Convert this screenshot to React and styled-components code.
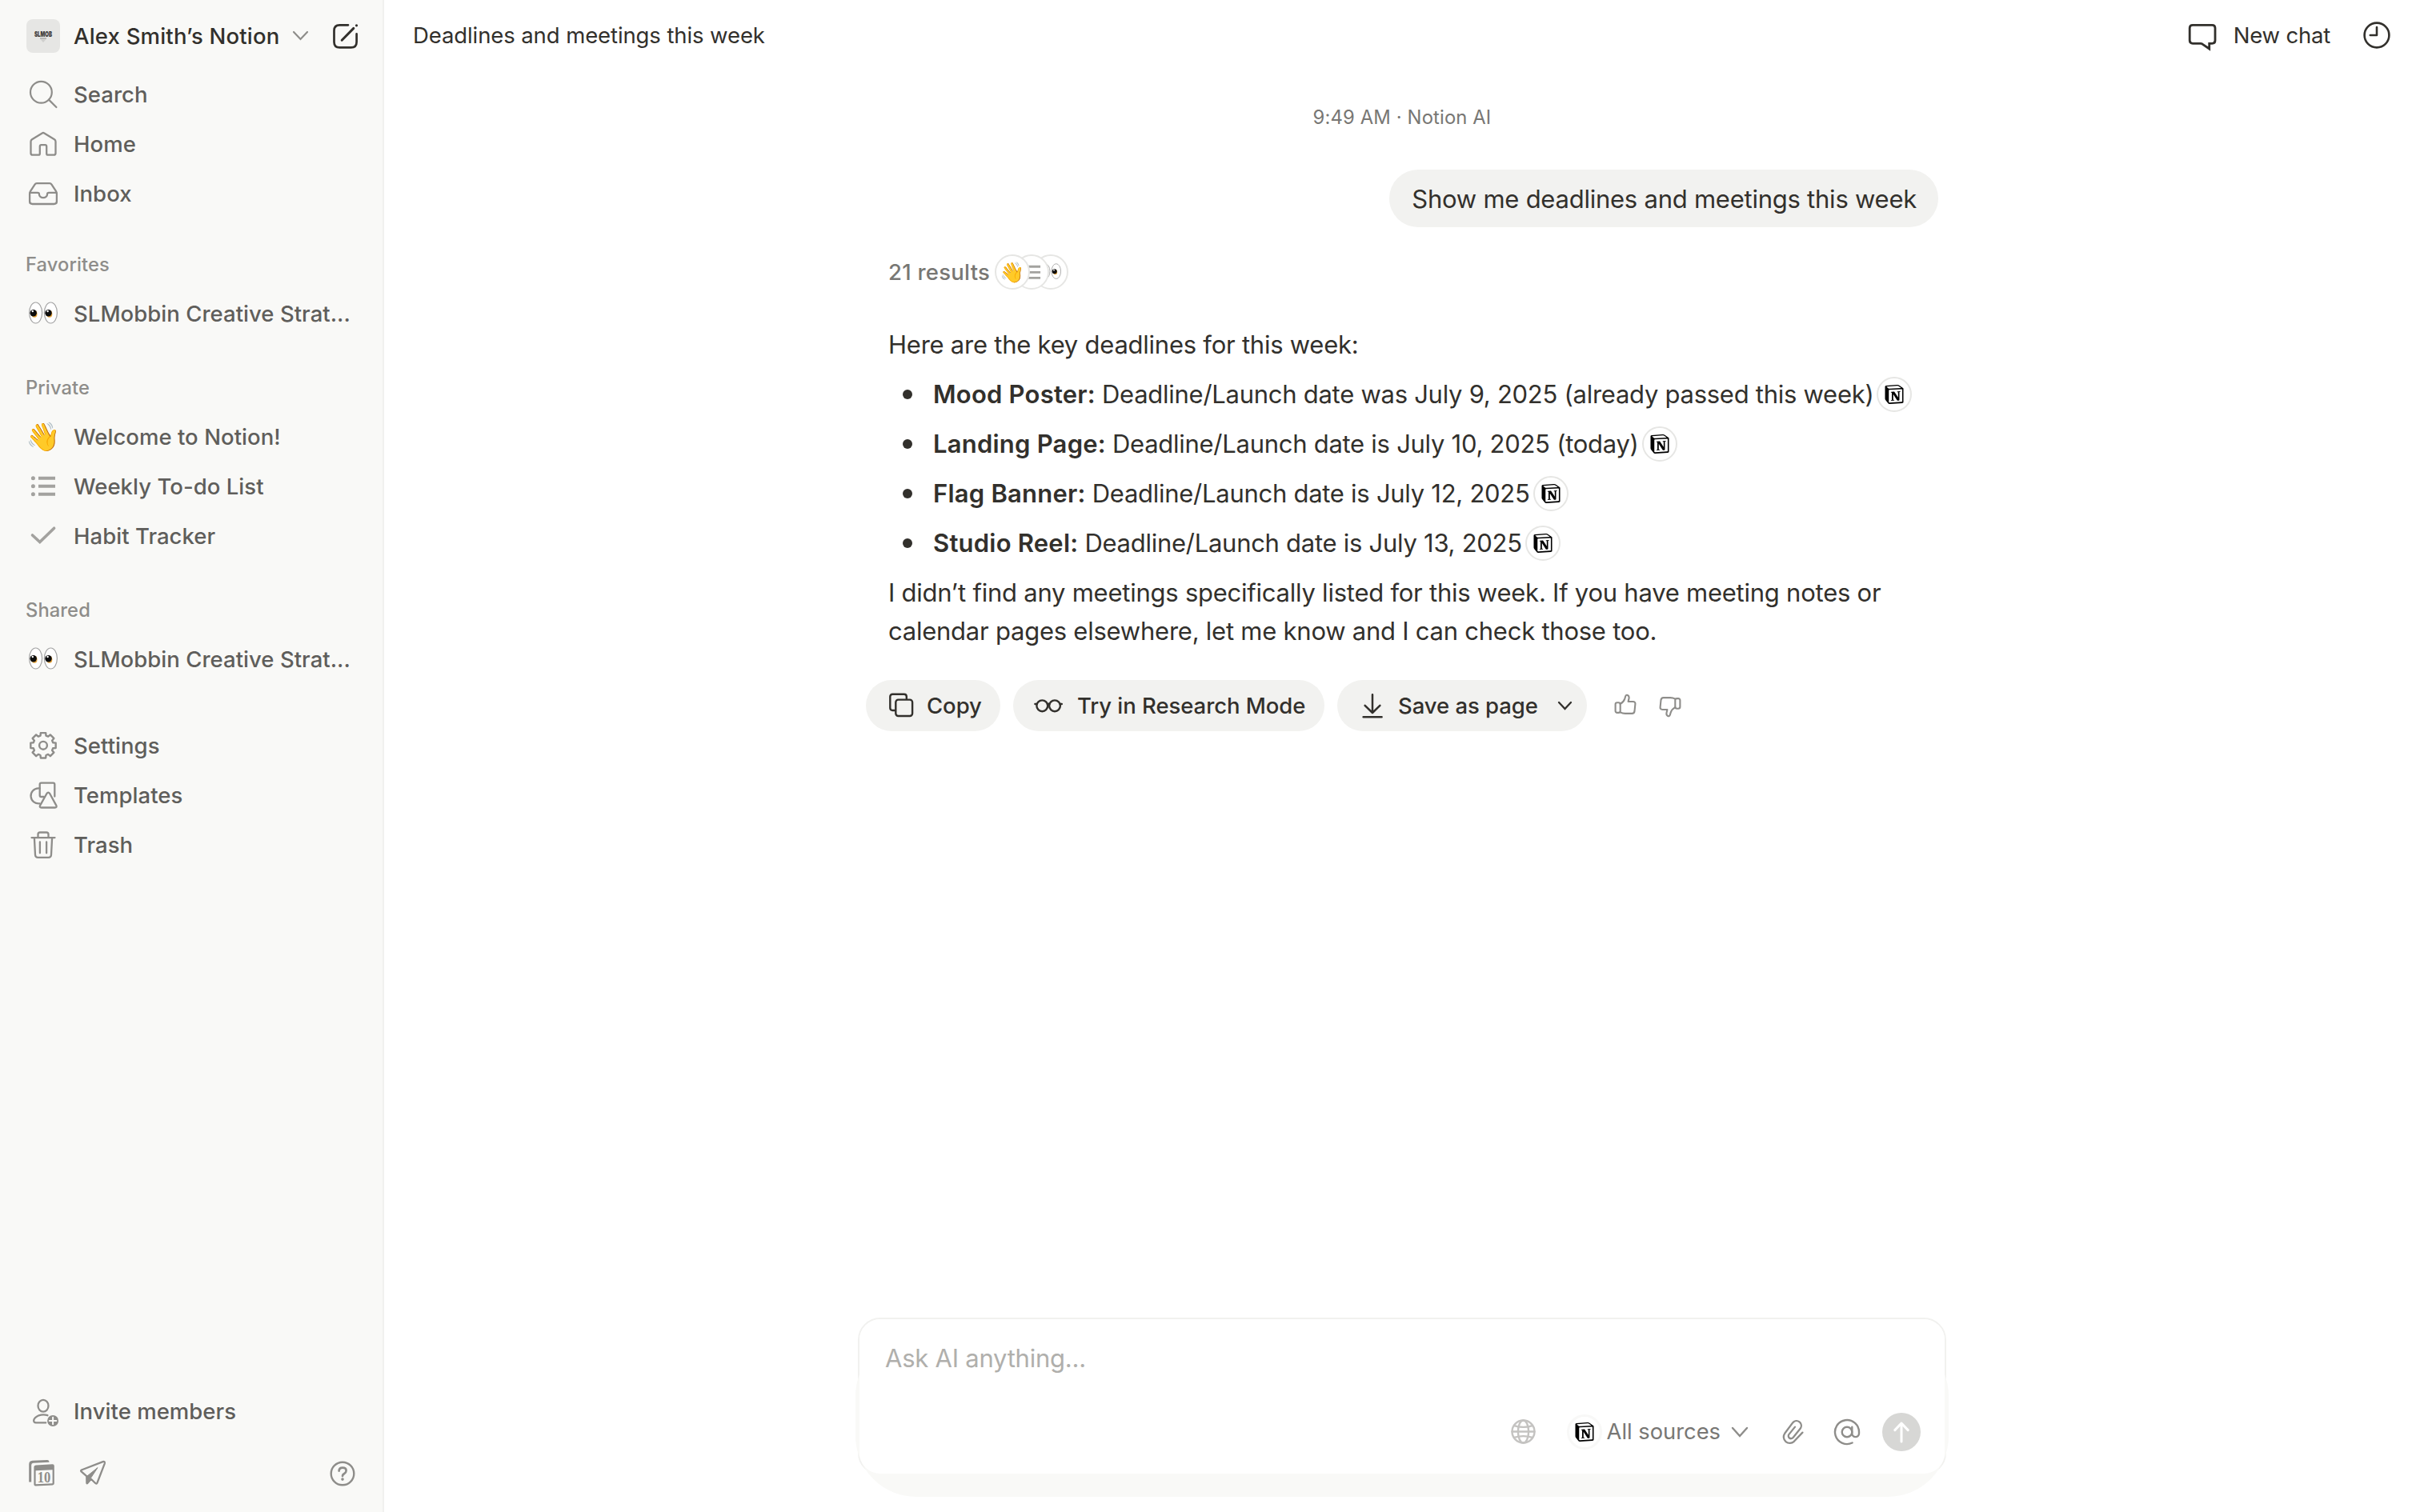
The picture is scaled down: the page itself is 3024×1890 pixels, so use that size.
import React from "react";
import styled, { createGlobalStyle } from "styled-components";
import { SiNotion } from "react-icons/si";

const ink = "#32302c";
const strong = "#5f5e5b";
const muted = "#8e8d8a";
const faint = "#a3a29f";
const panel = "#f9f9f7";

const GlobalStyle = createGlobalStyle`
  *, *::before { box-sizing: border-box; }
  body {
    margin: 0;
    background: #ffffff;
    font-family: Inter, "Liberation Sans", sans-serif;
    color: ${ink};
  }
  ul, p { margin: 0; padding: 0; }
  button { font: inherit; color: inherit; border: 0; background: none; padding: 0; margin: 0; }
`;

const Page = styled.div`
  display: flex;
  width: 100vw;
  height: 100vh;
  overflow: hidden;
`;

/* Sidebar */

const Sidebar = styled.nav`
  display: flex;
  flex-direction: column;
  flex: none;
  width: 480px;
  padding-bottom: 16px;
  background: ${panel};
  border-right: 2px solid #f1f1ef;
`;

const Row = styled.div`
  display: flex;
  align-items: center;
  gap: 16px;
  height: 62px;
  padding: 0 32px;
  font-size: 27.5px;
  font-weight: 500;
  line-height: 36px;
  letter-spacing: 0.04px;
  color: ${strong};
  white-space: nowrap;
`;

const Workspace = styled(Row)`
  height: 87px;
  padding: 2px 24px 0 32px;
  color: ${ink};
  letter-spacing: 0.2px;
`;

const WorkspaceName = styled.span`
  display: flex;
  align-items: center;
  gap: 14px;
  flex: 1;
`;

const Avatar = styled.span`
  display: flex;
  align-items: center;
  justify-content: center;
  width: 42px;
  height: 42px;
  margin: 0 1px;
  border-radius: 8px;
  background: #e6e6e4;
`;

const SectionLabel = styled.div`
  height: 60px;
  padding-left: 32px;
  font-size: 23.7px;
  font-weight: 500;
  line-height: 60px;
  letter-spacing: 0.1px;
  color: ${muted};
`;

const Section = styled.section`
  margin-top: ${(p) => p.$gap}px;
`;

const SidebarFooter = styled.footer`
  margin-top: auto;
`;

const Tools = styled.div`
  display: flex;
  align-items: center;
  gap: 20px;
  height: 79px;
  padding: 15px 28px 0 30px;
`;

const Spacer = styled.span`
  flex: 1;
`;

const IconBox = styled.span`
  display: flex;
  align-items: center;
  justify-content: center;
  flex: none;
  width: ${(p) => p.$size ?? 44}px;
  height: ${(p) => p.$size ?? 44}px;
  color: ${(p) => p.$color ?? muted};
`;

const Stroke = styled.svg`
  display: block;
  flex: none;
  overflow: visible;
  fill: none;
  stroke: currentColor;
  stroke-width: ${(p) => p.$w ?? 2.3};
  stroke-linecap: round;
  stroke-linejoin: round;
`;

const Emoji = styled.span`
  font-family: "Noto Color Emoji", sans-serif;
  font-size: ${(p) => p.$size}px;
  line-height: 1;
  letter-spacing: 0;
`;

/* Main */

const Main = styled.main`
  display: flex;
  flex-direction: column;
  flex: 1;
  align-items: center;
  background: #ffffff;
`;

const TopBar = styled.header`
  display: flex;
  align-items: center;
  width: 100%;
  height: 88px;
  padding: 0 36px 0 36px;
  font-size: 27.5px;
  line-height: 36px;
  letter-spacing: -0.1px;
  color: ${ink};
`;

const NewChat = styled.button`
  display: flex;
  align-items: center;
  gap: 21px;
  margin-right: 40px;
  letter-spacing: -0.2px;
`;

const Column = styled.div`
  display: flex;
  flex-direction: column;
  width: 1360px;
  flex: 1;
`;

const Timestamp = styled.div`
  margin-top: 44px;
  text-align: center;
  font-size: 23.8px;
  line-height: 30px;
  letter-spacing: 0.14px;
  color: #787774;
`;

const Bubble = styled.div`
  align-self: flex-end;
  height: 72px;
  margin: 50px 10px 0 0;
  padding: 1px 27px 0 28px;
  border-radius: 36px;
  background: #f2f2f0;
  font-size: 31px;
  line-height: 72px;
  letter-spacing: -0.24px;
`;

const Answer = styled.article`
  padding-left: 38px;
  font-size: 31px;
  line-height: 48px;
  letter-spacing: -0.24px;
`;

const Results = styled.div`
  display: flex;
  align-items: center;
  gap: 6px;
  height: 44px;
  margin: 34px 0 45px;
  font-size: 27.5px;
  font-weight: 500;
  letter-spacing: 0.25px;
  color: #787774;
`;

const Stack = styled.span`
  display: flex;
  isolation: isolate;
`;

const Chip = styled.span`
  display: inline-flex;
  align-items: center;
  justify-content: center;
  flex: none;
  width: 44px;
  height: 44px;
  border: 2px solid #e6e6e4;
  border-radius: 50%;
  background: #ffffff;
  color: ${(p) => p.$color ?? "#000000"};
`;

const StackChip = styled(Chip)`
  position: relative;
  z-index: ${(p) => p.$z};
  & + & { margin-left: -20px; }
`;

const List = styled.ul`
  display: flex;
  flex-direction: column;
  gap: 14px;
  margin: 14px 0;
  list-style: none;
`;

const Item = styled.li`
  display: flex;
  align-items: center;
  height: 48px;
  white-space: pre;
  letter-spacing: -0.27px;

  &::before {
    content: "";
    width: 12px;
    height: 12px;
    margin: 0 26px 0 18px;
    border-radius: 50%;
    background: ${ink};
  }

  b { font-weight: 600; letter-spacing: 0.22px; }
  ${Chip} { margin-left: 4px; }
`;

const Actions = styled.div`
  display: flex;
  align-items: center;
  height: 64px;
  margin: 37px 0 0 10px;
`;

const Pill = styled.button`
  display: flex;
  align-items: center;
  height: 64px;
  width: ${(p) => p.$width}px;
  margin-right: 16px;
  padding-left: 26px;
  gap: ${(p) => p.$gap ?? 14}px;
  border-radius: 32px;
  background: #f2f2f0;
  font-size: 27.5px;
  font-weight: 500;
  letter-spacing: -0.06px;
  white-space: nowrap;

  > svg:nth-of-type(2) { margin-left: 11px; }
`;

const Feedback = styled.div`
  display: flex;
  gap: 24px;
  margin-left: 16px;
  color: ${muted};
`;

const Composer = styled.form`
  position: relative;
  z-index: 0;
  display: flex;
  flex-direction: column;
  justify-content: space-between;
  height: 197px;
  margin-top: auto;
  margin-bottom: 46px;
  padding: 25px 30px 28px 32px;
  border: 2px solid #f1f1ef;
  border-radius: 28px;
  background: #ffffff;

  &::before {
    content: "";
    position: absolute;
    z-index: -2;
    inset: 20px -5px -29px;
    border-radius: 76px;
    background: ${panel};
  }

  &::after {
    content: "";
    position: absolute;
    z-index: -1;
    inset: 0;
    border-radius: 26px;
    background: #ffffff;
  }
`;

const Placeholder = styled.div`
  font-size: 31px;
  line-height: 48px;
  letter-spacing: -0.24px;
  color: #b0afac;
`;

const ComposerTools = styled.div`
  display: flex;
  align-items: center;
  justify-content: flex-end;
  height: 48px;
  color: ${muted};
`;

const Globe = styled(IconBox)`
  margin-right: 38px;
`;

const Sources = styled.button`
  display: flex;
  align-items: center;
  margin-right: 40px;
  font-size: 27.3px;
  line-height: 36px;
  letter-spacing: 0;
  color: #787774;

  > svg { margin-left: 14px; color: ${muted}; }
`;

const SourceMark = styled(Chip)`
  margin-right: 6px;
  border-color: #f8f8f7;
  border-width: 3px;
`;

const Tool = styled(IconBox)`
  margin-right: ${(p) => p.$gap}px;
`;

const Send = styled.button`
  display: flex;
  align-items: center;
  justify-content: center;
  width: 48px;
  height: 48px;
  border-radius: 50%;
  background: #d7d7d5;
  color: #ffffff;
`;

/* Icons */

const Svg = ({ s = 44, children, ...rest }) => (
  <Stroke width={s} height={s} viewBox={`0 0 ${s} ${s}`} {...rest}>
    {children}
  </Stroke>
);

const SearchIcon = () => (
  <Svg $w={2.2}>
    <circle cx="19.4" cy="19.3" r="13.4" />
    <path d="M29 28.6 38.4 38" />
  </Svg>
);

const HomeIcon = () => (
  <Svg>
    <path d="M20.7 8.4 8 16.3Q6.5 17.3 6.5 19v14.4q0 2.3 2.3 2.3h7.2q1.8 0 1.8-1.8v-8.9q0-1.8 1.8-1.8h4.8q1.8 0 1.8 1.8v8.9q0 1.8 1.8 1.8h7.2q2.3 0 2.3-2.3V19q0-1.7-1.5-2.7L23.3 8.4q-1.3-.8-2.6 0Z" />
  </Svg>
);

const InboxIcon = () => (
  <Svg>
    <path d="M14 9.2h16q1.6 0 2.5 1.4l5.4 8.2q1 1.5 1 3.3v9.6q0 3.3-3.3 3.3H8.4q-3.3 0-3.3-3.3v-9.6q0-1.8 1-3.3l5.4-8.2q.9-1.4 2.5-1.4Z" />
    <path d="M5.6 20.9H15q1.9 0 1.9 1.7a5.1 4.6 0 0 0 10.2 0q0-1.7 1.9-1.7h9.4" />
  </Svg>
);

const ListIcon = ({ s = 44 }) => (
  <svg width={s} height={s} viewBox="0 0 44 44" fill="currentColor">
    <circle cx="9.4" cy="11.7" r="2.5" />
    <circle cx="9.4" cy="21.7" r="2.5" />
    <circle cx="9.4" cy="31.7" r="2.5" />
    <path d="M16 9.7h21v4H16zM16 19.7h21v4H16zM16 29.7h21v4H16z" />
  </svg>
);

const CheckIcon = () => (
  <Svg $w={3.6}>
    <path d="M8.5 21 17.8 29.6 35.6 12.2" strokeLinejoin="miter" />
  </Svg>
);

const gearPath = (() => {
  const pts = [];
  for (let i = 0; i < 8; i += 1) {
    const a = (i * Math.PI) / 4 - Math.PI / 2;
    [
      [-0.28, 12.7],
      [-0.2, 16],
      [0.2, 16],
      [0.28, 12.7],
    ].forEach(([d, r]) => {
      pts.push(`${(22 + r * Math.cos(a + d)).toFixed(2)} ${(21.8 + r * Math.sin(a + d)).toFixed(2)}`);
    });
  }
  return `M${pts.join("L")}Z`;
})();

const SettingsIcon = () => (
  <Svg $w={2.4}>
    <path d={gearPath} />
    <circle cx="22" cy="21.8" r="4.9" />
  </Svg>
);

const TemplatesIcon = () => (
  <Svg>
    <path d="M17.7 13.4h-1.9a9.5 9.5 0 1 0 1.6 18.9" />
    <path d="M22.7 24h-3.2q-1.8 0-1.8-1.8V8.5q0-1.8 1.8-1.8h15q1.8 0 1.8 1.8v15" />
    <path d="m30.2 20 8 14.6q1.4 2.9-1.6 2.9H19.8q-3 0-1.6-2.9l8.2-14.6q1.9-2.8 3.8 0Z" />
  </Svg>
);

const TrashIcon = () => (
  <Svg>
    <path d="M7.5 13.1h29M15.5 13V9q0-2.5 2.5-2.5h8q2.5 0 2.5 2.5v4" />
    <path d="M10.9 13.3 12 34.5q.2 3.4 3.4 3.4h13.2q3.2 0 3.4-3.4l1.1-21.2M17.9 18.4v13.9M26.1 18.4v13.9" />
  </Svg>
);

const InviteIcon = () => (
  <Svg $w={2.3}>
    <ellipse cx="22" cy="15.2" rx="6.5" ry="7.4" />
    <path d="M27.4 27.2Q22 25.5 16.5 27.3 11 29.8 10.2 33.2q-.3 3.2 2.6 3.2h12.4" />
    <circle cx="34.1" cy="34" r="7" fill="currentColor" stroke="none" />
    <path d="M34.1 29.7v8.6M29.8 34h8.6" stroke={panel} strokeWidth="2" />
  </Svg>
);

const ComposeIcon = () => (
  <Svg $w={2.7}>
    <path d="M25 8.3H14.4q-6.9 0-6.9 6.9v14.2q0 6.9 6.9 6.9h14.3q6.9 0 6.9-6.9V19.4" />
    <path d="m17.2 27.2 14.6-14.8" strokeWidth="3" />
    <path d="M35.5 8.8v0" strokeWidth="3.2" />
  </Svg>
);

const CalendarIcon = () => (
  <svg width="44" height="44" viewBox="0 0 44 44" fill="currentColor">
    <path d="M6.2 32.6V10.5q0-4.4 4.4-4.7l18.4-.9q2.5 0 2.5 2.9l-20 .9q-2.3.2-2.3 2.5v21.4Z" />
    <path
      fillRule="evenodd"
      d="M14.8 11.4 35.6 10.2q2.2 0 2.2 2.1v21.9q0 2-2.2 2.2l-21.2 1.1q-2 0-2-2V13.7q0-2.2 2.4-2.3Zm-.2 6.9v17l21-1.1v-17Z"
    />
    <text x="25" y="32.6" textAnchor="middle" fontFamily="Liberation Serif, serif" fontWeight="700" fontSize="18.5" textLength="16.5" lengthAdjust="spacingAndGlyphs">
      10
    </text>
  </svg>
);

const SendPlaneIcon = () => (
  <Svg>
    <path d="M7.8 17.5 34.6 7.1q2.8-.6 2.2 2.2L27.5 33.5q-1 2-2.6.3l-5.1-5.1-4.6 5.3q-.8.6-.8-.4v-8.3L7.6 19.4q-1-1.2.2-1.9Z" />
    <path d="M14.4 25.5 28 14.6 19.4 27.6l-4.6 6.2Z" fill="currentColor" strokeWidth="1" />
  </Svg>
);

const HelpIcon = () => (
  <Svg $w={2.4}>
    <circle cx="22" cy="22" r="14.3" />
    <path d="M17.6 18.6q.2-4 4.5-4 4.5 0 4.5 3.7 0 2.3-2.4 3.7-2.2 1.2-2.2 3.1" strokeWidth="2.7" />
    <path d="M22 29.1v0" strokeWidth="3.6" />
  </Svg>
);

const EyesIcon = ({ w = 36 }) => (
  <svg width={w} height={(w * 30) / 36} viewBox="0 0 36 30">
    {[0, 18.8].map((dx) => (
      <g key={dx} transform={`translate(${dx} 0)`}>
        <ellipse cx="8.6" cy="14" rx="8" ry="13" fill="#ffffff" stroke="#a2a2a2" strokeWidth="1.2" />
        <ellipse cx="7" cy="15.4" rx="3.5" ry="4.4" fill="#e5a33a" />
        <circle cx="5.7" cy="14.2" r="4.2" fill="#0d0d0d" />
        <circle cx="4.8" cy="12" r="1.2" fill="#ffffff" />
      </g>
    ))}
  </svg>
);

const ChevronIcon = ({ w = 20, h = 10, sw = 2.4 }) => (
  <Stroke width={w} height={h} viewBox={`0 0 ${w} ${h}`} $w={sw}>
    <path d={`M1 1 ${w / 2} ${h - 1} ${w - 1} 1`} strokeLinejoin="miter" />
  </Stroke>
);

const ChatIcon = () => (
  <Svg s={36} $w={2.8}>
    <path d="M6 5.3h24.2q3.8 0 3.8 3.8v15.4q0 3.8-3.8 3.8h-3.5V35l-9-6.2q-.8-.5-1.8-.5H6q-3.8 0-3.8-3.8V9.1q0-3.8 3.8-3.8Z" strokeLinejoin="miter" />
  </Svg>
);

const ClockIcon = () => (
  <Svg s={36} $w={2.6}>
    <circle cx="18" cy="18" r="15.4" />
    <path d="M18 8v10H9.8" />
  </Svg>
);

const CopyIcon = () => (
  <Svg s={36} $w={2.4}>
    <path d="M10 24H7.4q-3.1 0-3.1-3.1V6.8q0-3.1 3.1-3.1h14.3q3.1 0 3.1 3.1v2.6" />
    <rect x="11.3" y="10.6" width="20.8" height="20.4" rx="3.2" />
  </Svg>
);

const GlassesIcon = () => (
  <Svg s={36} $w={2.4}>
    <circle cx="10.3" cy="18.3" r="6.9" />
    <circle cx="26" cy="18.3" r="6.9" />
    <path d="M1.4 16h2.2M16.9 16.2q1.2-.8 2.5 0M32.6 16h2.2" />
  </Svg>
);

const DownloadIcon = () => (
  <Svg s={36} $w={2.5}>
    <path d="M18 4.2v22.6M8.6 17.8l9.4 9.2 9.4-9.2M6.6 32.2h23" />
  </Svg>
);

const ThumbIcon = ({ down }) => (
  <Svg s={32} $w={2.1}>
    <g transform={down ? "rotate(180 16 16)" : undefined}>
      <rect x="3.6" y="12.3" width="6.1" height="12.6" rx="2.2" />
      <path d="M9.7 13.9q4.3-2.4 5.6-6.5l.9-3.1q.8-2.1 2.7-1.3 2.2 1.1 1.6 4L19.6 11h6q3.1.2 2.8 3l-.9 9q-.4 2.9-3.1 2.9h-8.6q-3.4 0-6.1-1.6" />
    </g>
  </Svg>
);

const GlobeIcon = () => (
  <Svg s={32} $w={2.4}>
    <circle cx="15.5" cy="15.5" r="14" />
    <ellipse cx="15.5" cy="15.5" rx="6.6" ry="14" />
    <path d="M1.5 15.5h28M4.1 8.1q11.4 3.6 22.8 0M4.1 22.9q11.4-3.6 22.8 0" />
  </Svg>
);

const ClipIcon = () => (
  <Svg s={32} $w={2.3}>
    <path d="M28.4 16.6 17.8 27.8a7.7 7.7 0 0 1-11.6-10L16.4 4.1a6 6 0 0 1 9.4 7.4L16.6 23a3.2 3.2 0 0 1-5.1-4.1L19 9.6" />
  </Svg>
);

const AtIcon = () => (
  <Stroke width="36" height="36" viewBox="0 0 24 24" $w={1.6}>
    <circle cx="12" cy="12" r="4.2" />
    <path d="M16.2 7.8v5.4a2.9 2.9 0 0 0 5.8 0V12a10 10 0 1 0-5.6 9" />
  </Stroke>
);

const ArrowUpIcon = () => (
  <Svg s={32} $w={3}>
    <path d="M16 28V5M7.8 13.6 16 5l8.2 8.6" />
  </Svg>
);

/* Screen */

const NavRow = ({ icon, color, children }) => (
  <Row>
    <IconBox $color={color}>{icon}</IconBox>
    {children}
  </Row>
);

const deadlines = [
  ["Mood Poster:", "Deadline/Launch date was July 9, 2025 (already passed this week)"],
  ["Landing Page:", "Deadline/Launch date is July 10, 2025 (today)"],
  ["Flag Banner:", "Deadline/Launch date is July 12, 2025"],
  ["Studio Reel:", "Deadline/Launch date is July 13, 2025"],
];

export default function App() {
  return (
    <Page>
      <GlobalStyle />
      <Sidebar>
        <Workspace>
          <Avatar>
            <svg width="42" height="42" viewBox="0 0 42 42">
              <text x="10" y="22" fontFamily="Inter, sans-serif" fontWeight="900" fontSize="9" letterSpacing="0" textLength="22" lengthAdjust="spacingAndGlyphs" fill="#3c3b39">
                SLMOB
              </text>
              <path d="M17 24h8" stroke="#8c8b89" strokeWidth="1" />
              <path d="M17.5 25.2h7L21 29Z" fill="#cfcfcd" />
            </svg>
          </Avatar>
          <WorkspaceName>
            Alex Smith’s Notion
            <IconBox $size={24}>
              <ChevronIcon w={19} h={11} sw={2.2} />
            </IconBox>
          </WorkspaceName>
          <IconBox $color={ink}>
            <ComposeIcon />
          </IconBox>
        </Workspace>
        <NavRow icon={<SearchIcon />}>Search</NavRow>
        <NavRow icon={<HomeIcon />}>Home</NavRow>
        <NavRow icon={<InboxIcon />}>Inbox</NavRow>

        <Section $gap={28}>
          <SectionLabel>Favorites</SectionLabel>
          <NavRow icon={<EyesIcon />}>SLMobbin Creative Strat...</NavRow>
        </Section>
        <Section $gap={32}>
          <SectionLabel>Private</SectionLabel>
          <NavRow icon={<Emoji $size={35}>👋</Emoji>}>Welcome to Notion!</NavRow>
          <NavRow icon={<ListIcon />} color={faint}>Weekly To-do List</NavRow>
          <NavRow icon={<CheckIcon />} color={faint}>Habit Tracker</NavRow>
        </Section>
        <Section $gap={32}>
          <SectionLabel>Shared</SectionLabel>
          <NavRow icon={<EyesIcon />}>SLMobbin Creative Strat...</NavRow>
        </Section>
        <Section $gap={46}>
          <NavRow icon={<SettingsIcon />}>Settings</NavRow>
          <NavRow icon={<TemplatesIcon />}>Templates</NavRow>
          <NavRow icon={<TrashIcon />}>Trash</NavRow>
        </Section>

        <SidebarFooter>
          <NavRow icon={<InviteIcon />}>Invite members</NavRow>
          <Tools>
            <IconBox><CalendarIcon /></IconBox>
            <IconBox><SendPlaneIcon /></IconBox>
            <Spacer />
            <IconBox><HelpIcon /></IconBox>
          </Tools>
        </SidebarFooter>
      </Sidebar>

      <Main>
        <TopBar>
          Deadlines and meetings this week
          <Spacer />
          <NewChat>
            <ChatIcon />
            New chat
          </NewChat>
          <ClockIcon />
        </TopBar>

        <Column>
          <Timestamp>9:49 AM · Notion AI</Timestamp>
          <Bubble>Show me deadlines and meetings this week</Bubble>
          <Answer>
            <Results>
              21 results
              <Stack>
                <StackChip $z={3}>
                  <Emoji $size={25}>👋</Emoji>
                </StackChip>
                <StackChip $z={2} $color={faint}>
                  <ListIcon s={31} />
                </StackChip>
                <StackChip $z={1}>
                  <EyesIcon w={26} />
                </StackChip>
              </Stack>
            </Results>
            <p>Here are the key deadlines for this week:</p>
            <List>
              {deadlines.map(([name, text]) => (
                <Item key={name}>
                  <b>{name} </b>
                  {text}
                  <Chip>
                    <SiNotion size={24} />
                  </Chip>
                </Item>
              ))}
            </List>
            <p>
              I didn’t find any meetings specifically listed for this week. If you have meeting notes or
              <br />
              calendar pages elsewhere, let me know and I can check those too.
            </p>
          </Answer>
          <Actions>
            <Pill $width={168}>
              <CopyIcon />
              Copy
            </Pill>
            <Pill $width={389} $gap={18}>
              <GlassesIcon />
              Try in Research Mode
            </Pill>
            <Pill $width={312}>
              <DownloadIcon />
              Save as page
              <ChevronIcon w={17} h={10} sw={2.3} />
            </Pill>
            <Feedback>
              <ThumbIcon />
              <ThumbIcon down />
            </Feedback>
          </Actions>

          <Composer as="div">
            <Placeholder>Ask AI anything...</Placeholder>
            <ComposerTools>
              <Globe $size={32} $color="#c4c3c1">
                <GlobeIcon />
              </Globe>
              <Sources>
                <SourceMark>
                  <SiNotion size={24} />
                </SourceMark>
                All sources
                <ChevronIcon w={20} h={12} sw={2.4} />
              </Sources>
              <Tool $size={32} $gap={36}>
                <ClipIcon />
              </Tool>
              <Tool $size={32} $gap={28}>
                <AtIcon />
              </Tool>
              <Send>
                <ArrowUpIcon />
              </Send>
            </ComposerTools>
          </Composer>
        </Column>
      </Main>
    </Page>
  );
}
